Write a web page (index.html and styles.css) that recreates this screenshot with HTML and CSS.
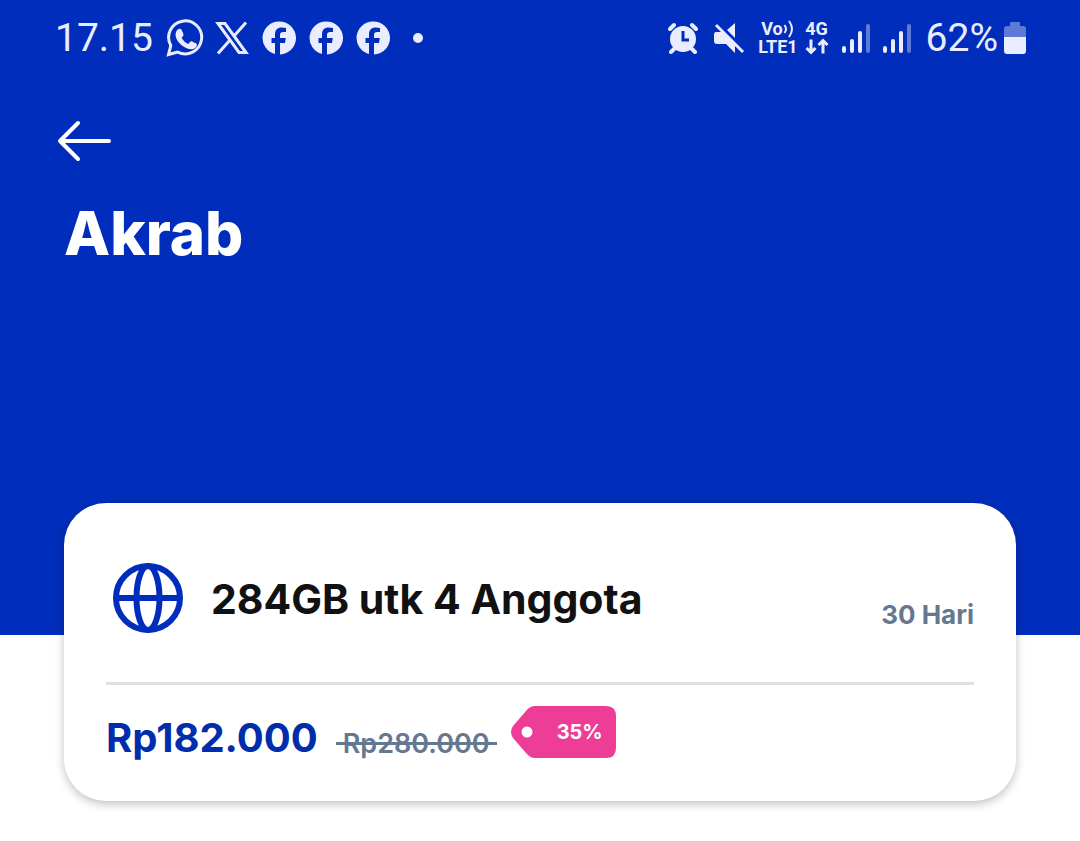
FILE: index.html
```html
<!DOCTYPE html>
<html lang="id">
<head>
    <meta charset="UTF-8">
    <meta name="viewport" content="width=device-width, initial-scale=1.0">
    <title>Akrab</title>
    <link rel="stylesheet" href="styles.css">
</head>
<body>

<svg class="sprite">
    <symbol id="icon-facebook" viewBox="0 0 34 34">
        <path d="M17 .5a16.500 16.500 0 0 0-4 32.500V22H9.500v-5H13v-3.500C13 9 15.500 6.500 19.500 6.500c1.500 0 3 .2 4.500.5v4h-2.500c-2.500 0-3.500 1.200-3.500 2.800V17h5.800l-.8 5h-5v11.500A16.500 16.500 0 0 0 17 .5z"/>
    </symbol>
    <symbol id="icon-signal" viewBox="0 0 28 34">
        <rect x="0" y="25" width="4" height="7" rx="2"/>
        <rect x="8" y="18" width="4" height="14" rx="2"/>
        <rect x="16" y="10" width="4" height="22" rx="2"/>
        <rect x="24" y="3" width="4" height="29" rx="2" opacity="0.4"/>
    </symbol>
</svg>

<header class="hero">
    <div class="status-bar">
        <div class="status-left">
            <span class="status-text">17.15</span>
            <svg class="icon-whatsapp" viewBox="0 0 38 38">
                <path class="line" d="M2.500 35.500l2.300-9A16.500 16.500 0 1 1 11.500 33z"/>
                <path d="M12.500 10c1-.6 2.400-.4 2.900.6l2 4.500c.3.800 0 1.500-.5 2.100l-1.300 1.500c1.500 3 3.800 5 6.800 6.300l1.800-2.200c.5-.6 1.200-.7 1.900-.4l4 2c.8.400 1 1 .7 2-.8 2.700-3.300 4-5.900 3.800C17 29.500 9.800 22 9.500 16c0-2.500 1-4.800 3-6z"/>
            </svg>
            <svg class="icon-x" viewBox="0 0 34 34">
                <path class="line" d="M3 2.500h7l21 29h-7z"/>
                <path class="line" d="M31 1.500L19 15M15 19L3 32.500"/>
            </svg>
            <svg class="icon-round"><use href="#icon-facebook"/></svg>
            <svg class="icon-round"><use href="#icon-facebook"/></svg>
            <svg class="icon-round"><use href="#icon-facebook"/></svg>
            <span class="dot"></span>
        </div>
        <div class="status-right">
            <svg class="icon-alarm" viewBox="0 0 30 32">
                <path class="line thick" d="M2 7l4-4M28 7l-4-4M6 27l-3 3M24 27l3 3"/>
                <circle cx="15" cy="17" r="13"/>
                <path class="cut" d="M15 9v9h6"/>
            </svg>
            <svg class="icon-mute" viewBox="0 0 32 32">
                <path d="M22 1v15l-8-8zM3 10h6l13 13v8l-9-9H4q-3 0-3-3v-6q0-3 2-3z"/>
                <path class="line" d="M3 3l27 27"/>
            </svg>
            <span class="network">
                <span class="volte">Vo
                    <svg class="icon-waves" viewBox="0 0 12 18">
                        <path class="line" d="M1.500 5q3 4 0 8M6 1q6 8 0 16"/>
                    </svg>
                </span>
                <span>LTE1</span>
            </span>
            <span class="network"><span>4G</span>
                <svg class="icon-arrows" viewBox="0 0 24 16">
                    <path class="line" d="M6 1v13M1.500 9.500L6 14l4.500-4.500M18 15V2M13.500 6.500L18 2l4.500 4.500"/>
                </svg>
            </span>
            <svg class="icon-signal"><use href="#icon-signal"/></svg>
            <svg class="icon-signal"><use href="#icon-signal"/></svg>
            <span class="battery">
                <span class="status-text">62%</span>
                <svg class="icon-battery" viewBox="0 0 22 34">
                    <path opacity="0.4" d="M6 5V2q0-1 1-1h8q1 0 1 1v3h3q3 0 3 3v8H0V8q0-3 3-3z"/>
                    <path d="M0 16h22v14q0 3-3 3H3q-3 0-3-3z"/>
                </svg>
            </span>
        </div>
    </div>

    <button class="back-btn" type="button" aria-label="Kembali">
        <svg class="icon-back" viewBox="0 0 54 42">
            <path class="line" d="M52 21H3M21 3L3 21l18 18"/>
        </svg>
    </button>
    <h1 class="title">Akrab</h1>
</header>

<main class="card">
    <div class="plan">
        <svg class="icon-globe" viewBox="0 0 72 72">
            <circle cx="36" cy="36" r="32"/>
            <ellipse cx="36" cy="36" rx="11.500" ry="32"/>
            <path d="M4 36h64"/>
        </svg>
        <h2 class="plan-name">284GB utk 4 Anggota</h2>
        <span class="plan-days">30 Hari</span>
    </div>
    <div class="pricing">
        <span class="price">Rp182.000</span>
        <s class="old-price">Rp280.000</s>
        <span class="discount">
            <svg class="tag" viewBox="0 0 106 54">
                <path d="M24 1h71q10 0 10 10v32q0 10-10 10H24q-5 0-9-5L2 33q-4-6 0-12L15 6q4-5 9-5z"/>
                <circle cx="16" cy="27" r="5.500"/>
            </svg>
            <span class="discount-text">35%</span>
        </span>
    </div>
</main>

</body>
</html>
```
FILE: styles.css
```css
body {
    margin: 0;
    background: #fff;
    font-family: Inter, "Liberation Sans", sans-serif;
}

h1, h2 {
    margin: 0;
}

.sprite {
    position: absolute;
    width: 0;
    height: 0;
}

.hero {
    height: 635px;
    background: #002dbb;
    color: #fff;
}

.status-bar {
    display: flex;
    justify-content: space-between;
    height: 75px;
    padding: 0 54px 0 55px;
    color: #e9edff;
    font-family: Roboto, sans-serif;
}

.status-bar svg {
    fill: currentColor;
}

.status-left, .status-right {
    display: flex;
    align-items: center;
    gap: 13px;
}

.status-bar .line {
    fill: none;
    stroke: currentColor;
    stroke-width: 3;
}

.status-bar .thick {
    stroke-width: 4;
    stroke-linecap: round;
}

.status-bar .cut {
    fill: none;
    stroke: #002dbb;
    stroke-width: 3;
}

.status-text {
    font-size: 39px;
    line-height: 48px;
}

.icon-whatsapp {
    width: 38px;
    height: 38px;
    margin: 0 -2px 0 0;
}

.icon-x, .icon-round {
    width: 34px;
    height: 34px;
}

.dot {
    width: 10px;
    height: 10px;
    margin-left: 10px;
    border-radius: 50%;
    background: currentColor;
}

.icon-alarm {
    width: 30px;
    height: 32px;
}

.icon-mute {
    width: 32px;
    height: 32px;
    margin-left: 2px;
}

.network {
    display: flex;
    flex-direction: column;
    align-items: center;
    font-size: 18px;
    font-weight: 700;
    line-height: 18px;
}

.network + .network {
    margin-left: -6px;
}

.volte {
    display: flex;
    align-items: center;
}

.icon-waves {
    width: 12px;
    height: 18px;
}

.status-bar .icon-waves .line {
    stroke-width: 2;
}

.icon-arrows {
    width: 24px;
    height: 17px;
}

.icon-signal {
    width: 28px;
    height: 34px;
}

.icon-signal + .battery {
    margin-left: 2px;
}

.battery {
    display: flex;
    align-items: center;
    gap: 6px;
}

.icon-battery {
    width: 22px;
    height: 34px;
}

.back-btn {
    display: block;
    margin: 45px 0 0 57px;
    padding: 0;
    border: 0;
    background: none;
    color: inherit;
    cursor: pointer;
}

.icon-back {
    display: block;
    width: 54px;
    height: 42px;
    fill: none;
    stroke: currentColor;
    stroke-width: 4;
    stroke-linecap: round;
    stroke-linejoin: round;
}

.title {
    padding: 35px 64px 0;
    font-size: 60px;
    line-height: 72px;
    font-weight: 800;
}

.card {
    margin: -132px 64px 40px;
    padding: 0 42px;
    border-radius: 42px;
    background: #fff;
    box-shadow: 0 3px 10px rgba(0, 0, 0, 0.25);
}

.plan {
    display: flex;
    align-items: center;
    padding: 59px 0 48px 6px;
    border-bottom: 3px solid #e0e0e0;
}

.icon-globe {
    flex: none;
    width: 72px;
    height: 72px;
    margin-right: 27px;
    fill: none;
    stroke: #002dbb;
    stroke-width: 6;
}

.plan-name {
    flex: 1;
    padding-top: 2px;
    color: #111;
    font-size: 41px;
    line-height: 48px;
    font-weight: 700;
}

.plan-days {
    padding-top: 34px;
    color: #64788f;
    font-size: 26px;
    line-height: 32px;
    font-weight: 700;
}

.pricing {
    display: flex;
    align-items: center;
    padding: 20px 0 42px;
}

.price {
    padding-top: 12px;
    color: #002dab;
    font-size: 40px;
    line-height: 42px;
    font-weight: 700;
}

.old-price {
    position: relative;
    margin: 0 14px 0 18px;
    padding: 24px 7px 0;
    color: #64788f;
    font-size: 27px;
    line-height: 30px;
    font-weight: 600;
    text-decoration: none;
}

/* strike line runs a little past the digits */
.old-price::after {
    content: "";
    position: absolute;
    right: 0;
    bottom: 14px;
    left: 0;
    height: 3px;
    background: currentColor;
}

.discount {
    display: grid;
    align-items: center;
}

.tag, .discount-text {
    grid-area: 1 / 1;
}

.tag {
    width: 106px;
    height: 54px;
    fill: #ee3d96;
}

.tag circle {
    fill: #fff;
}

.discount-text {
    padding-right: 14px;
    color: #fff;
    font-size: 20px;
    line-height: 26px;
    font-weight: 700;
    text-align: right;
}
```
